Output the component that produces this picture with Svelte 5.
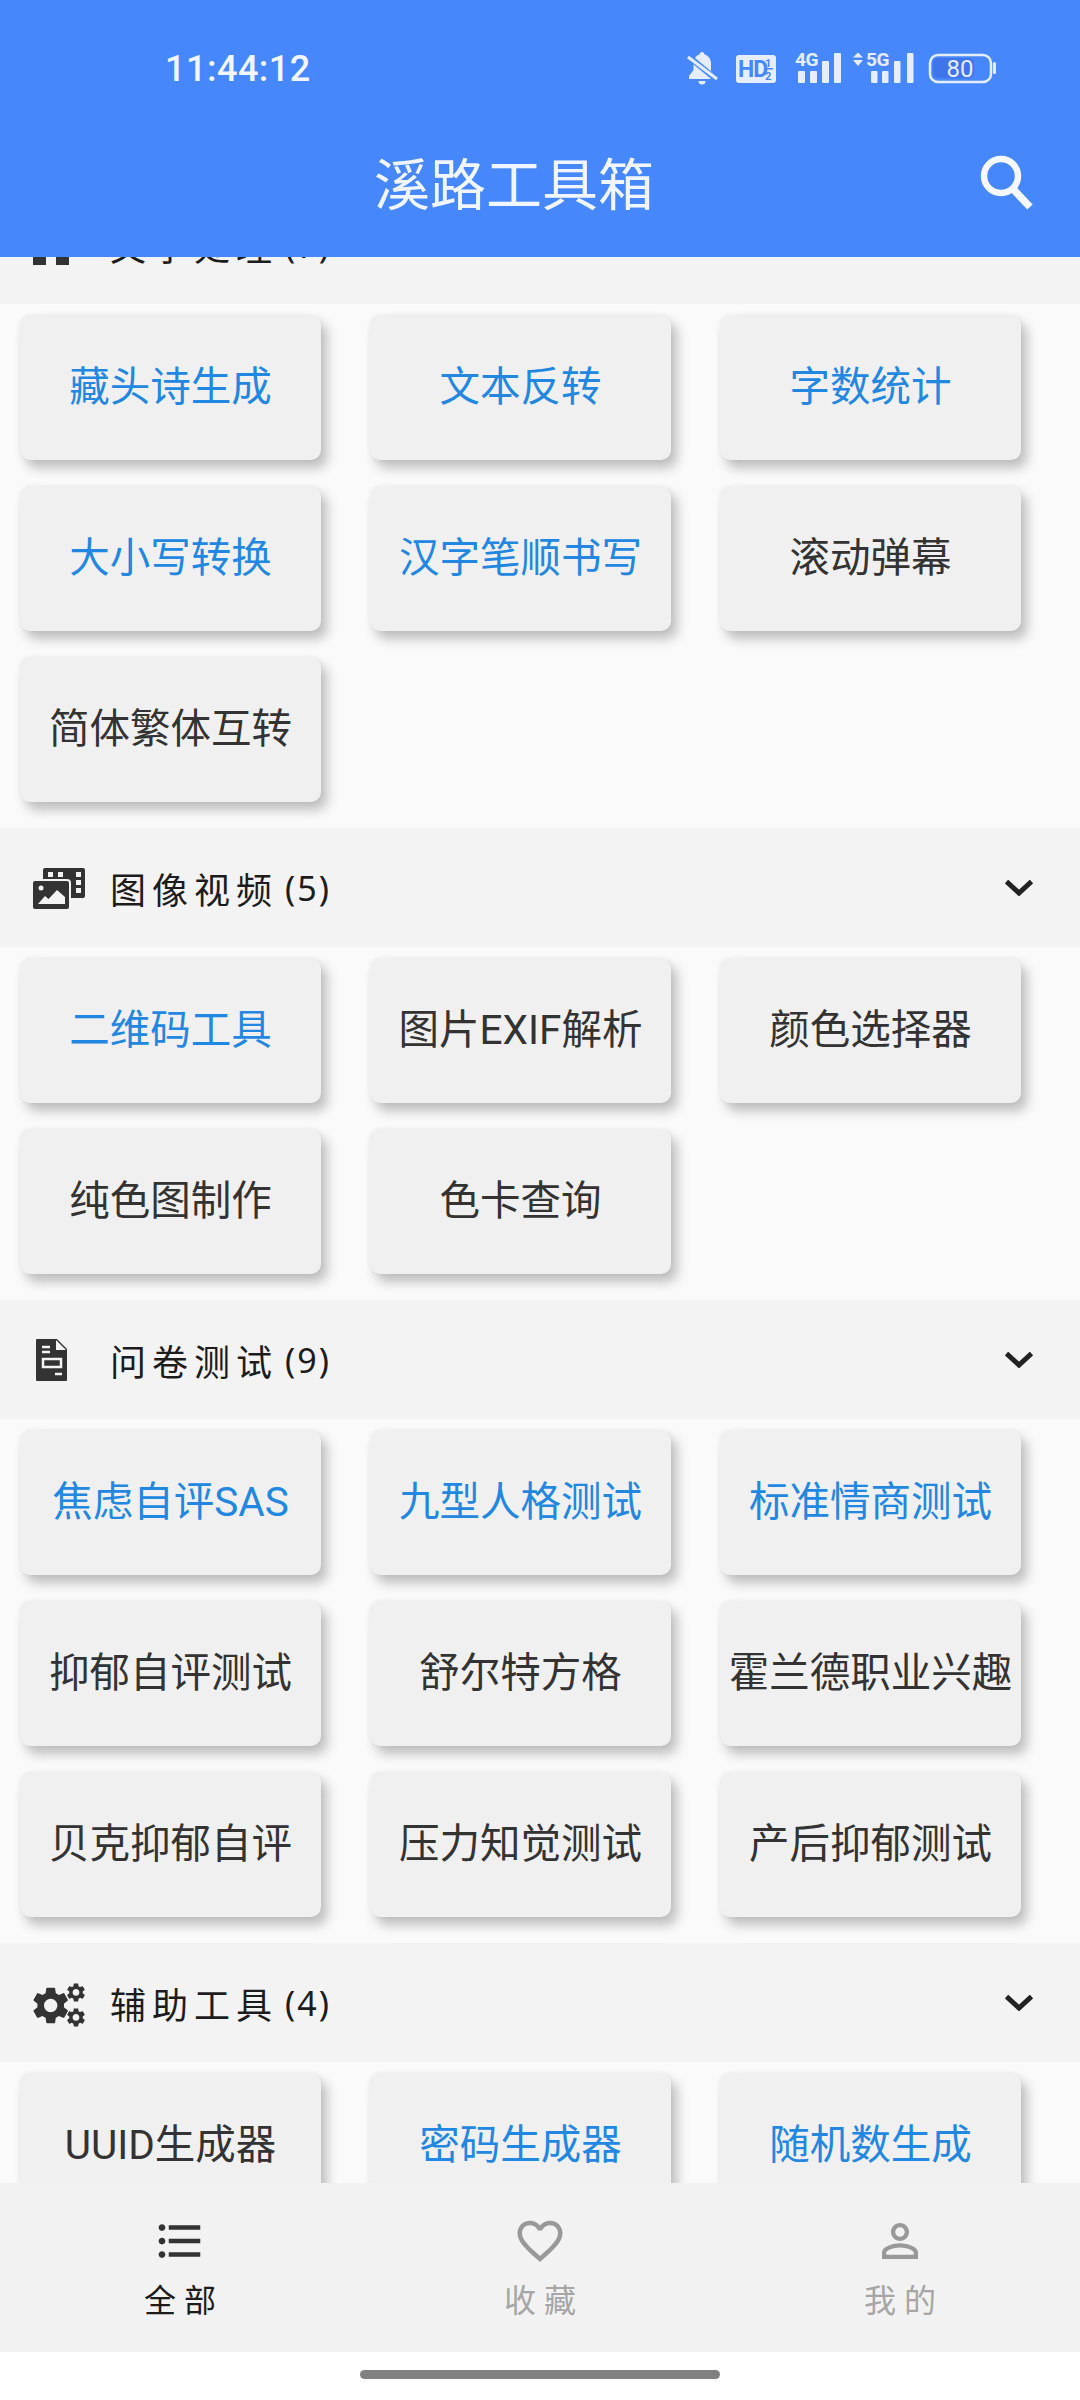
<script>
	const sections = [
		{
			name: '文字处理',
			count: 7,
			icon: 'text',
			tools: [
				{label: '藏头诗生成', on: true},
				{label: '文本反转', on: true},
				{label: '字数统计', on: true},
				{label: '大小写转换', on: true},
				{label: '汉字笔顺书写', on: true},
				{label: '滚动弹幕'},
				{label: '简体繁体互转'}
			]
		},
		{
			name: '图像视频',
			count: 5,
			icon: 'media',
			tools: [
				{label: '二维码工具', on: true},
				{label: '图片EXIF解析'},
				{label: '颜色选择器'},
				{label: '纯色图制作'},
				{label: '色卡查询'}
			]
		},
		{
			name: '问卷测试',
			count: 9,
			icon: 'doc',
			tools: [
				{label: '焦虑自评SAS', on: true},
				{label: '九型人格测试', on: true},
				{label: '标准情商测试', on: true},
				{label: '抑郁自评测试'},
				{label: '舒尔特方格'},
				{label: '霍兰德职业兴趣'},
				{label: '贝克抑郁自评'},
				{label: '压力知觉测试'},
				{label: '产后抑郁测试'}
			]
		},
		{
			name: '辅助工具',
			count: 4,
			icon: 'gears',
			tools: [
				{label: 'UUID生成器'},
				{label: '密码生成器', on: true},
				{label: '随机数生成', on: true}
			]
		}
	];

	const gear =
		'M19.14 12.94c.04-.3.06-.61.06-.94 0-.32-.02-.64-.07-.94l2.03-1.58c.18-.14.23-.41.12-.61l-1.92-3.32c-.12-.22-.37-.29-.59-.22l-2.39.96c-.5-.38-1.03-.7-1.62-.94l-.36-2.54c-.04-.24-.24-.41-.48-.41h-3.84c-.24 0-.43.17-.47.41l-.36 2.54c-.59.24-1.13.57-1.62.94l-2.39-.96c-.22-.08-.47 0-.59.22L2.74 8.87c-.12.21-.08.47.12.61l2.03 1.58c-.05.3-.09.63-.09.94s.02.64.07.94l-2.03 1.58c-.18.14-.23.41-.12.61l1.92 3.32c.12.22.37.29.59.22l2.39-.96c.5.38 1.03.7 1.62.94l.36 2.54c.05.24.24.41.48.41h3.84c.24 0 .44-.17.47-.41l.36-2.54c.59-.24 1.13-.56 1.62-.94l2.39.96c.22.08.47 0 .59-.22l1.92-3.32c.12-.22.07-.47-.12-.61l-2.01-1.58zM12 15.6c-1.98 0-3.6-1.62-3.6-3.6s1.62-3.6 3.6-3.6 3.6 1.62 3.6 3.6-1.62 3.6-3.6 3.6z';
</script>

<div class="screen">
	<header class="appbar">
		<div class="status">
			<span class="time">11:44:12</span>
			<svg class="status-icons" width="310" height="40" viewBox="0 0 310 40" fill="#e6eefe">
				<path d="M15 3c-1.5 0-2.4 1-2.5 2.4C8.6 6.6 6.5 10 6.5 14v7L2 27v3h26v-3l-4-5v-8c0-4-2.500-7.400-6.500-8.600C17.400 4 16.500 3 15 3zM11.500 32a3.500 3.500 0 0 0 7 0z" />
				<path d="M1 7 L30 31" stroke="#4688fb" stroke-width="6" />
				<path d="M1 8 L30 30" stroke="#e6eefe" stroke-width="3" />

				<rect x="49" y="6" width="40" height="28" rx="3" />
				<text class="st hd" x="51" y="28" fill="#4688fb">HD</text>
				<text class="st half" x="78" y="18" fill="#4688fb">1</text>
				<rect x="78" y="19" width="8" height="1.500" fill="#4688fb" />
				<text class="st half" x="78" y="31" fill="#4688fb">2</text>

				<text class="st net" x="108" y="17">4G</text>
				<rect x="111" y="22" width="7" height="12" rx="1" />
				<rect x="123" y="22" width="7" height="12" rx="1" />
				<rect x="135" y="12" width="7" height="22" rx="1" />
				<rect x="147" y="4" width="7" height="30" rx="1" />

				<path d="M171 3.500l5 5h-10zM171 17l-5-6h10z" />
				<text class="st net" x="179" y="17">5G</text>
				<rect x="184" y="22" width="6.500" height="12" rx="1" />
				<rect x="195" y="22" width="6.500" height="12" rx="1" />
				<rect x="207" y="12" width="6.500" height="22" rx="1" />
				<rect x="220" y="4" width="6.500" height="30" rx="1" />

				<rect x="246" y="9" width="41" height="20" rx="5" fill="#3f74ea" />
				<rect x="243" y="6" width="61" height="27" rx="8" fill="none" stroke="#e6eefe" stroke-width="2.500" />
				<rect x="306" y="13" width="3" height="12" rx="1.500" />
				<text class="st batt" x="273" y="28" text-anchor="middle">80</text>
			</svg>
		</div>
		<div class="toolbar">
			<div class="title">溪路工具箱</div>
			<svg class="search" width="68" height="68" viewBox="0 0 68 68" fill="none" stroke="#f5f8ff">
				<circle cx="29" cy="27" r="17" stroke-width="6.500" />
				<path d="M41 40l17 18" stroke-width="7.500" />
			</svg>
		</div>
	</header>

	<main class="list">
		{#each sections as section}
			<section>
				<div class="band">
					<div class="band-icon">
						{#if section.icon === 'text'}
							<svg width="52" height="42" viewBox="0 0 52 42" fill="#333">
								<path d="M4 10h6v23h3v8H0v-8h4zM27 10h6v23h3v8H23v-8h4z" />
							</svg>
						{:else if section.icon === 'media'}
							<svg width="52" height="42" viewBox="0 0 52 42">
								<rect x="10" y="1" width="42" height="30" rx="2" fill="#333" />
								<rect x="43" y="5" width="5" height="5" fill="#f3f3f3" />
								<rect x="43" y="13" width="5" height="5" fill="#f3f3f3" />
								<rect x="43" y="21" width="5" height="5" fill="#f3f3f3" />
								<rect x="15" y="5" width="5" height="5" fill="#f3f3f3" />
								<rect x="25" y="5" width="5" height="5" fill="#f3f3f3" />
								<rect x="-1" y="13" width="38" height="30" rx="3" fill="#333" stroke="#f3f3f3" stroke-width="2" />
								<circle cx="8" cy="21" r="2.500" fill="#f3f3f3" />
								<path d="M5 37l7-8 3.500 3L24 23l8 7v7z" fill="#f3f3f3" />
							</svg>
						{:else if section.icon === 'doc'}
							<svg class="doc" width="31" height="42" viewBox="0 0 31 42">
								<path d="M1 0h20l10 10v31a1 1 0 0 1-1 1H1a1 1 0 0 1-1-1V1a1 1 0 0 1 1-1z" fill="#333" />
								<path d="M20 1v10h10z" fill="#f3f3f3" />
								<path d="M6 8h8M6 13h8M19 35h7" stroke="#f3f3f3" stroke-width="2.500" />
								<rect x="7" y="20" width="18" height="8" fill="none" stroke="#f3f3f3" stroke-width="2.500" />
							</svg>
						{:else}
							<svg class="gears" width="52" height="42" viewBox="0 0 52 42" fill="#333">
								<path transform="translate(-4.500 1.300) scale(1.850)" d={gear} />
								<path transform="translate(31.700 -.8) scale(.94)" d={gear} />
								<path transform="translate(31.700 24.200) scale(.94)" d={gear} />
							</svg>
						{/if}
					</div>
					<span class="band-name">{section.name}</span>
					<span class="band-count">({section.count})</span>
					<svg class="chevron" width="28" height="16" viewBox="0 0 28 16" fill="none" stroke="#222" stroke-width="5">
						<path d="M1.500 1.500L14 13 26.500 1.500" />
					</svg>
				</div>
				<div class="grid">
					{#each section.tools as tool}
						<button class="tool" class:on={tool.on}>{tool.label}</button>
					{/each}
				</div>
			</section>
		{/each}
	</main>

	<nav class="tabs">
		<div class="tab active">
			<svg width="54" height="54" viewBox="0 0 24 24" fill="#333">
				<path d="M4 10.500c-.83 0-1.500.67-1.500 1.500s.67 1.500 1.500 1.500 1.500-.67 1.500-1.500-.67-1.500-1.500-1.500zm0-6c-.83 0-1.500.67-1.500 1.500S3.170 7.500 4 7.500 5.500 6.830 5.500 6 4.830 4.500 4 4.500zm0 12c-.83 0-1.500.68-1.500 1.500s.68 1.500 1.500 1.500 1.500-.68 1.500-1.500-.67-1.500-1.500-1.500zM7 19h14v-2H7v2zm0-6h14v-2H7v2zm0-8v2h14V5H7z" />
			</svg>
			<span>全部</span>
		</div>
		<div class="tab">
			<svg width="54" height="54" viewBox="0 0 24 24" fill="#999">
				<path d="M16.500 3c-1.740 0-3.410.81-4.500 2.090C10.910 3.810 9.240 3 7.500 3 4.420 3 2 5.420 2 8.500c0 3.780 3.400 6.860 8.550 11.540L12 21.350l1.450-1.320C18.600 15.360 22 12.280 22 8.500 22 5.420 19.580 3 16.500 3zm-4.400 15.550l-.1.100-.1-.1C7.140 14.240 4 11.390 4 8.500 4 6.500 5.500 5 7.500 5c1.540 0 3.040.99 3.570 2.360h1.870C13.460 5.990 14.960 5 16.500 5c2 0 3.500 1.500 3.500 3.500 0 2.890-3.140 5.740-7.900 10.050z" />
			</svg>
			<span>收藏</span>
		</div>
		<div class="tab">
			<svg width="54" height="54" viewBox="0 0 24 24" fill="#999">
				<path d="M12 5.900c1.160 0 2.100.94 2.100 2.100s-.94 2.100-2.100 2.100S9.900 9.160 9.900 8s.94-2.100 2.100-2.100m0 9c2.970 0 6.100 1.460 6.100 2.100v1.100H5.900V17c0-.64 3.130-2.100 6.100-2.100M12 4C9.790 4 8 5.790 8 8s1.790 4 4 4 4-1.790 4-4-1.790-4-4-4zm0 9c-2.670 0-8 1.340-8 4v3h16v-3c0-2.660-5.330-4-8-4z" />
			</svg>
			<span>我的</span>
		</div>
	</nav>

	<div class="home-area">
		<div class="home-bar"></div>
	</div>
</div>

<style>
	:global(body) {
		margin: 0;
		background: #fff;
	}
	.screen {
		width: 1080px;
		height: 2400px;
		display: flex;
		flex-direction: column;
		overflow: hidden;
		font-family: 'Noto Sans', 'Noto Sans CJK SC', sans-serif;
		background: #fff;
	}

	/* app bar */
	.appbar {
		flex: none;
		height: 257px;
		background: #4688fb;
		color: #f5f8ff;
		position: relative;
		z-index: 2;
	}
	.status {
		height: 62px;
		padding: 38px 83px 0 165px;
		display: flex;
		justify-content: space-between;
		align-items: center;
	}
	.time {
		font-family: Roboto, sans-serif;
		font-size: 36px;
		font-weight: 500;
		letter-spacing: 0.5px;
		color: #f2f6ff;
	}
	.st {
		font-family: Roboto, sans-serif;
	}
	.hd {
		font-size: 23px;
		font-weight: 700;
		letter-spacing: -1px;
	}
	.half {
		font-size: 11px;
		font-weight: 700;
	}
	.net {
		font-size: 19px;
		font-weight: 700;
		letter-spacing: -0.5px;
	}
	.batt {
		font-size: 24px;
	}
	.toolbar {
		height: 145px;
		padding: 8px 40px 0 80px;
		display: flex;
		align-items: center;
		gap: 24px;
	}
	.title {
		flex: 1;
		text-align: center;
		font-family: 'Noto Sans CJK SC', sans-serif;
		font-size: 56px;
		line-height: 1.2;
		color: #f0f5ff;
	}
	.search {
		margin-top: 4px;
	}

	/* scrolled list */
	.list {
		flex: 1;
		min-height: 0;
		overflow: hidden;
		background: #fafafa;
	}
	section:first-child {
		margin-top: -72px;
	}
	.band {
		height: 119px;
		padding: 0 47px 0 33px;
		display: flex;
		align-items: center;
		background: #f3f3f3;
		color: #1c1c1c;
	}
	.band-icon {
		width: 52px;
		margin-right: 25px;
		display: flex;
	}
	.doc {
		margin-left: 3px;
	}
	.gears {
		overflow: visible;
	}
	.band-name {
		font-family: 'Noto Sans CJK SC', sans-serif;
		font-size: 36px;
		letter-spacing: 6px;
	}
	.band-count {
		margin-left: 7px;
		font-size: 34px;
		letter-spacing: 2px;
	}
	.chevron {
		margin-left: auto;
	}
	.grid {
		padding: 11px 59px 26px 20px;
		display: grid;
		grid-template-columns: repeat(3, 301px);
		grid-auto-rows: 145px;
		column-gap: 49px;
		row-gap: 26px;
	}
	.tool {
		border: 0;
		margin: 0;
		padding: 0 0 9px;
		border-radius: 10px;
		background: #f0f0f0;
		box-shadow: 6px 8px 12px rgba(0, 0, 0, 0.24), 0 0 5px rgba(0, 0, 0, 0.05);
		color: #333;
		font-family: Roboto, 'Noto Sans CJK SC', sans-serif;
		font-size: 40.5px;
		white-space: nowrap;
	}
	.tool.on {
		color: #2287e0;
	}

	/* bottom tabs */
	.tabs {
		flex: none;
		height: 169px;
		background: #f2f2f2;
		display: grid;
		grid-template-columns: repeat(3, 360px);
		position: relative;
		z-index: 2;
	}
	.tab {
		padding-top: 31px;
		display: flex;
		flex-direction: column;
		align-items: center;
		color: #a6a6a6;
	}
	.tab.active {
		color: #1c1c1c;
	}
	.tab span {
		margin-top: 10px;
		font-family: 'Noto Sans CJK SC', sans-serif;
		font-size: 32px;
		line-height: 40px;
		letter-spacing: 8px;
		padding-left: 8px;
	}
	.home-area {
		flex: none;
		height: 30px;
		display: flex;
		justify-content: center;
		padding-top: 18px;
	}
	.home-bar {
		width: 360px;
		height: 9px;
		border-radius: 5px;
		background: #808080;
	}
</style>
